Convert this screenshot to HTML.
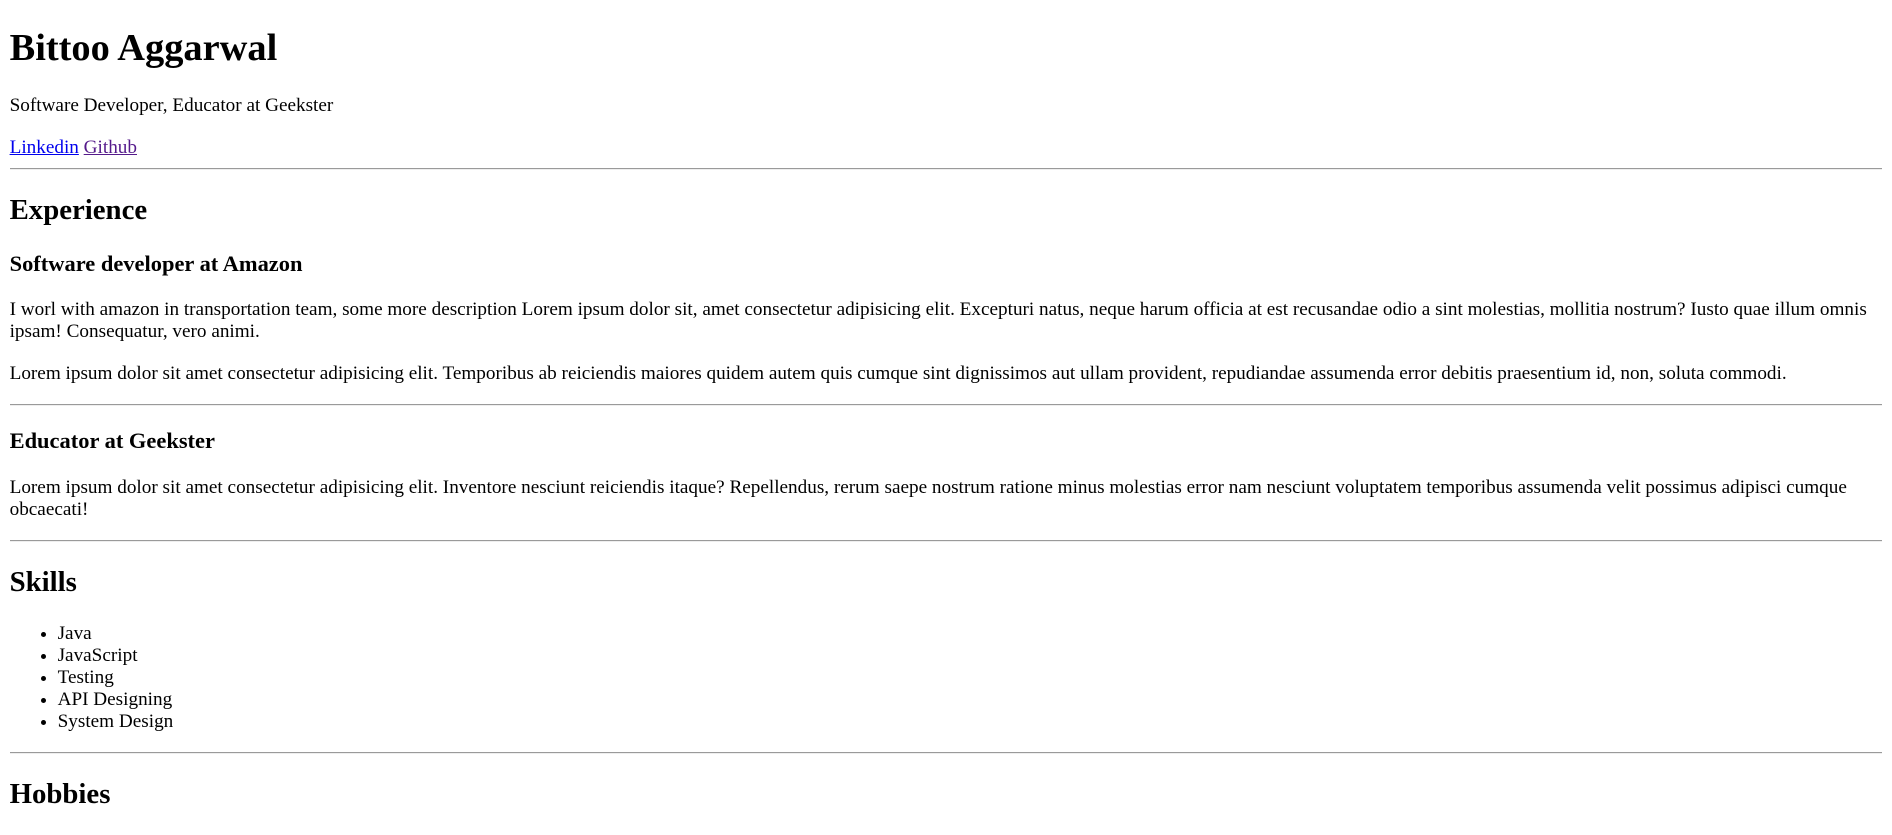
<!DOCTYPE html>
<html style="zoom:1.2">
<head><meta charset="utf-8">
<style>
body{font-family:"Liberation Serif",serif;margin:8px;color:#000;background:#fff}
a{color:#0000ee}
a.v{color:#551a8b}
hr{border:none;border-top:1px solid #9a9a9a;border-bottom:1px solid #eee;margin:8px 0}
</style></head>
<body>
<h1>Bittoo Aggarwal</h1>
<p>Software Developer, Educator at Geekster</p>
<a href="#">Linkedin</a> <a class="v" href="#">Github</a>
<hr>
<h2>Experience</h2>
<h3>Software developer at Amazon</h3>
<p>I worl with amazon in transportation team, some more description Lorem ipsum dolor sit, amet consectetur adipisicing elit. Excepturi natus, neque harum officia at est recusandae odio a sint molestias, mollitia nostrum? Iusto quae illum omnis ipsam! Consequatur, vero animi.</p>
<p>Lorem ipsum dolor sit amet consectetur adipisicing elit. Temporibus ab reiciendis maiores quidem autem quis cumque sint dignissimos aut ullam provident, repudiandae assumenda error debitis praesentium id, non, soluta commodi.</p>
<hr>
<h3>Educator at Geekster</h3>
<p>Lorem ipsum dolor sit amet consectetur adipisicing elit. Inventore nesciunt reiciendis itaque? Repellendus, rerum saepe nostrum ratione minus molestias error nam nesciunt voluptatem temporibus assumenda velit possimus adipisci cumque obcaecati!</p>
<hr>
<h2>Skills</h2>
<ul>
<li>Java</li>
<li>JavaScript</li>
<li>Testing</li>
<li>API Designing</li>
<li>System Design</li>
</ul>
<hr>
<h2>Hobbies</h2>
</body>
</html>
